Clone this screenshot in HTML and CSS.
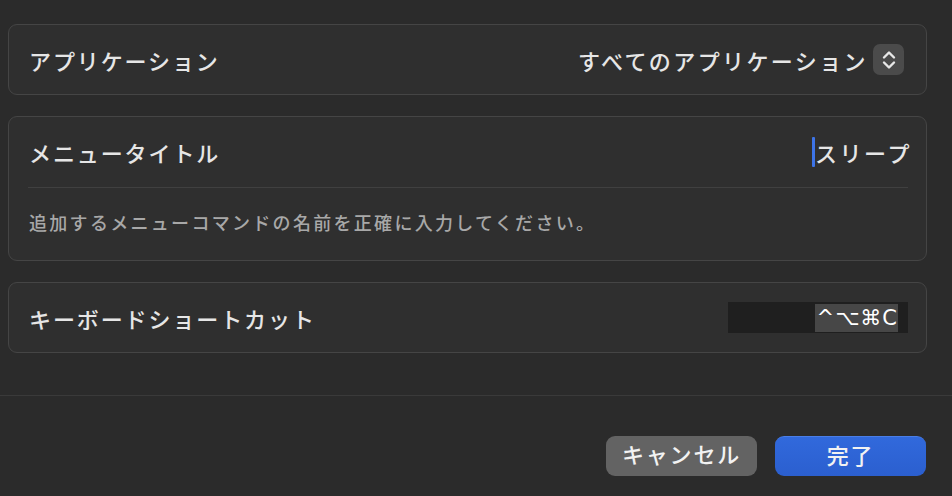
FILE: index.html
```html
<!DOCTYPE html>
<html lang="ja">
<head>
<meta charset="utf-8">
<link rel="stylesheet" href="styles.css">
</head>
<body>
<div class="sheet">
  <div class="content">
    <div class="card row">
      <span class="label">アプリケーション</span>
      <div class="popup">
        <span class="value">すべてのアプリケーション</span>
        <span class="stepper">
          <svg width="20" height="24" viewBox="0 0 20 24"><path d="M5 9.5 L10 4.5 L15 9.5 M5 14.5 L10 19.5 L15 14.5" fill="none" stroke="#e8e8e8" stroke-width="2.4" stroke-linecap="round" stroke-linejoin="round"/></svg>
        </span>
      </div>
    </div>
    <div class="card stack">
      <div class="row top">
        <span class="label">メニュータイトル</span>
        <span class="value"><span class="caret"></span>スリープ</span>
      </div>
      <div class="sep"></div>
      <div class="hint">追加するメニューコマンドの名前を正確に入力してください。</div>
    </div>
    <div class="card row">
      <span class="label">キーボードショートカット</span>
      <div class="shortcut"><span class="sel">^⌥⌘C</span></div>
    </div>
  </div>
  <div class="footer">
    <button class="btn cancel">キャンセル</button>
    <button class="btn done">完了</button>
  </div>
</div>
</body>
</html>
```
FILE: styles.css
```css
html, body {
  margin: 0;
  padding: 0;
  background: #2b2b2b;
  width: 952px;
  height: 496px;
  overflow: hidden;
  font-family: "Noto Sans CJK JP", "Noto Sans", sans-serif;
  color: #e4e4e4;
}
.sheet {
  display: flex;
  flex-direction: column;
  height: 496px;
}
.content {
  padding: 24px 25px 0 8px;
  display: flex;
  flex-direction: column;
  gap: 21px;
  height: 396px;
  box-sizing: border-box;
  border-bottom: 1px solid #3a3a3a;
}
.card {
  background: #2f2f2f;
  border: 1px solid #454545;
  border-radius: 9px;
  box-sizing: border-box;
  flex: none;
}
.card.row {
  height: 71px;
  display: flex;
  align-items: center;
  justify-content: space-between;
  padding: 0 18px 0 20px;
}
.label, .value {
  font-size: 22px;
  font-weight: 500;
  letter-spacing: 1.9px;
  color: #e6e6e6;
  line-height: 30px;
}
.popup {
  display: flex;
  align-items: center;
  gap: 5px;
}
.popup .value { letter-spacing: 2.4px; }
.stepper {
  width: 31px;
  height: 31px;
  border-radius: 7px;
  background: #4b4b4b;
  display: flex;
  align-items: center;
  justify-content: center;
  margin-right: 4px;
}
.card.stack {
  height: 145px;
  padding: 0 18px 0 19px;
  display: flex;
  flex-direction: column;
}
.row.top {
  display: flex;
  justify-content: space-between;
  align-items: center;
  height: 70px;
  padding-left: 1px;
}
.row.top .value {
  display: flex;
  align-items: center;
  letter-spacing: 2.6px;
  margin-right: -4px;
}
.caret {
  display: inline-block;
  width: 3px;
  height: 30px;
  background: #3d74e8;
  border-radius: 1px;
  margin-right: 0;
}
.sep {
  height: 1px;
  background: #404040;
  flex: none;
}
.hint {
  font-size: 18px;
  font-weight: 500;
  letter-spacing: 2.3px;
  color: #a8a8a8;
  padding: 19px 0 0 1px;
  line-height: 30px;
}
.shortcut {
  width: 180px;
  height: 31px;
  background: #1f1f1f;
  display: flex;
  justify-content: flex-end;
  align-items: center;
  padding-right: 10px;
  box-sizing: border-box;
}
.sel {
  background: #474747;
  color: #ffffff;
  font-family: "DejaVu Sans", "Noto Sans", sans-serif;
  font-size: 21px;
  line-height: 28px;
  height: 28px;
  padding: 0 0 0 2px;
  letter-spacing: 1px;
}
.footer {
  display: flex;
  justify-content: flex-end;
  gap: 18px;
  padding: 40px 26px 0 0;
}
.btn {
  width: 151px;
  height: 40px;
  border: none;
  border-radius: 9px;
  font-family: "Noto Sans CJK JP", sans-serif;
  font-size: 22px;
  font-weight: 500;
  line-height: 32px;
  letter-spacing: 1.8px;
  color: #f2f2f2;
  padding: 0 0 6px;
}
.cancel { background: #636363; }
.done {
  background: linear-gradient(#3169dc, #2b5fcf);
  border-top: 1px solid #4a7ee6;
}
```
